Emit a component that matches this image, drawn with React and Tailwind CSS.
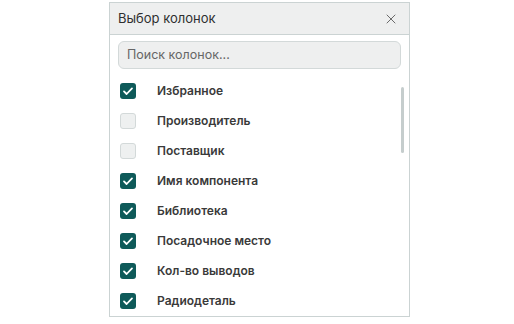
import { X } from 'lucide-react';

const columns = [
  { label: 'Избранное', on: true },
  { label: 'Производитель', on: false },
  { label: 'Поставщик', on: false },
  { label: 'Имя компонента', on: true },
  { label: 'Библиотека', on: true },
  { label: 'Посадочное место', on: true },
  { label: 'Кол-во выводов', on: true },
  { label: 'Радиодеталь', on: true },
];

const Box = ({ on }) =>
  on ? (
    <span className="flex h-4 w-4 items-center justify-center rounded-[3px] bg-[#0e5a59]">
      <svg viewBox="0 0 16 16" className="h-4 w-4" fill="none" stroke="white" strokeWidth="1.8" strokeLinecap="round" strokeLinejoin="round">
        <path d="M4 8.4l2.6 2.6L12 5.4" />
      </svg>
    </span>
  ) : (
    <span className="h-4 w-4 rounded-[3px] border border-[#d3d9d9] bg-[#eef0f0]" />
  );

export default function App() {
  return (
    <div className="min-h-screen bg-white pt-[2px] font-['Inter',sans-serif] text-[#333]">
      <div className="ml-[109px] w-[301px] border border-[#cbd3d3] bg-white">
        <div className="flex h-[32px] items-center justify-between border-b border-[#cbd3d3] bg-[#eeefef] pl-[8px] pr-[10px]">
          <span className="text-[13px] text-[#2f2f2f]">Выбор колонок</span>
          <X size={16} strokeWidth={1.3} className="text-[#555]" />
        </div>
        <div className="px-[8px] pt-[6px]">
          <div className="flex h-[28px] items-center rounded-[6px] border border-[#d3d9d9] bg-[#eeefef] px-[8px] text-[12.5px] text-[#666]">
            Поиск колонок...
          </div>
        </div>
        <div className="relative mt-[7px]">
          <ul>
            {columns.map((c) => (
              <li key={c.label} className="flex h-[30px] items-center pl-[10px]">
                <Box on={c.on} />
                <span className="ml-[21px] text-[12px] font-semibold text-[#3a3a3a]">{c.label}</span>
              </li>
            ))}
          </ul>
          <div className="absolute right-[5px] top-[11px] h-[66px] w-[3px] rounded-full bg-[#c5cdcd]" />
        </div>
      </div>
    </div>
  );
}
